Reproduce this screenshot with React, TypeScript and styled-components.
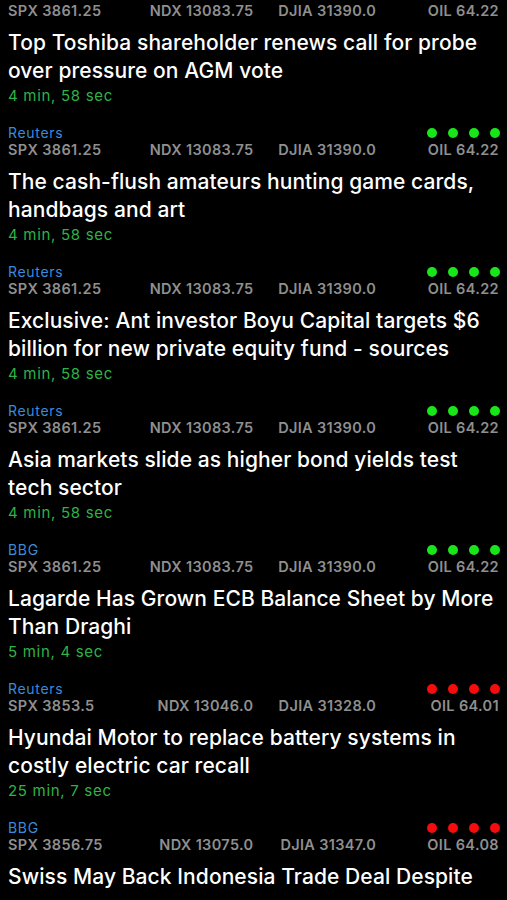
import React from "react";
import styled, { createGlobalStyle } from "styled-components";

type Tick = [string, string, string, string];

interface Story {
  source?: string;
  up?: boolean;
  ticks: Tick;
  title: string;
  age?: string;
}

const BASE: Tick = ["SPX 3861.25", "NDX 13083.75", "DJIA 31390.0", "OIL 64.22"];

const stories: Story[] = [
  { ticks: BASE, title: "Top Toshiba shareholder renews call for probe over pressure on AGM vote", age: "4 min, 58 sec" },
  { source: "Reuters", up: true, ticks: BASE, title: "The cash-flush amateurs hunting game cards, handbags and art", age: "4 min, 58 sec" },
  { source: "Reuters", up: true, ticks: BASE, title: "Exclusive: Ant investor Boyu Capital targets $6 billion for new private equity fund - sources", age: "4 min, 58 sec" },
  { source: "Reuters", up: true, ticks: BASE, title: "Asia markets slide as higher bond yields test tech sector", age: "4 min, 58 sec" },
  { source: "BBG", up: true, ticks: BASE, title: "Lagarde Has Grown ECB Balance Sheet by More Than Draghi", age: "5 min, 4 sec" },
  { source: "Reuters", up: false, ticks: ["SPX 3853.5", "NDX 13046.0", "DJIA 31328.0", "OIL 64.01"], title: "Hyundai Motor to replace battery systems in costly electric car recall", age: "25 min, 7 sec" },
  { source: "BBG", up: false, ticks: ["SPX 3856.75", "NDX 13075.0", "DJIA 31347.0", "OIL 64.08"], title: "Swiss May Back Indonesia Trade Deal Despite" },
];

const App: React.FC = () => {
  return (<>
    <Global />
    <Feed>
      {stories.map((s, i) => (
        <Item key={i}>
          {s.source && (
            <SourceRow>
              <Source>{s.source}</Source>
              <Dots>
                {[0, 1, 2, 3].map(d => <Dot key={d} up={!!s.up} />)}
              </Dots>
            </SourceRow>
          )}
          <Ticker>
            {s.ticks.map((t, j) => <Tick key={j}>{t}</Tick>)}
          </Ticker>
          <Title>{s.title}</Title>
          {s.age && <Age>{s.age}</Age>}
        </Item>
      ))}
    </Feed>
  </>)
}
export default App;

const Global = createGlobalStyle`
  html, body {
    margin: 0;
    background: #000;
    height: 900px;
    overflow: hidden;
  }
  body {
    font-family: Inter, "Noto Sans", sans-serif;
  }
`
const Feed = styled.div`
  display: flex;
  flex-direction: column;
  padding: 2px 8px 0 8px;
  gap: 17px;
`
const Item = styled.div`
  display: flex;
  flex-direction: column;
`
const SourceRow = styled.div`
  display: flex;
  justify-content: space-between;
  align-items: center;
  height: 17px;
`
const Source = styled.span`
  color: #3a8bdc;
  font-size: 14px;
  letter-spacing: 0.7px;
  line-height: 17px;
`
const Dots = styled.div`
  display: flex;
  gap: 11px;
  margin-right: -1px;
`
const Dot = styled.span<{ up: boolean }>`
  width: 10px;
  height: 10px;
  border-radius: 50%;
  background: ${p => p.up ? "#19e619" : "#f50d0d"};
`
const Ticker = styled.div`
  display: grid;
  grid-template-columns: repeat(4, 1fr);
  color: #8f8f8f;
  font-size: 14.5px;
  font-weight: 600;
  letter-spacing: 0.35px;
  line-height: 17px;
`
const Tick = styled.span`
  text-align: right;
  white-space: nowrap;
  &:first-child {
    text-align: left;
  }
`
const Title = styled.div`
  margin-top: 10px;
  color: #fff;
  font-size: 21px;
  font-weight: 500;
  letter-spacing: 0.08px;
  line-height: 28px;
`
const Age = styled.div`
  color: #2fb347;
  font-size: 15px;
  letter-spacing: 0.7px;
  line-height: 22px;
`
